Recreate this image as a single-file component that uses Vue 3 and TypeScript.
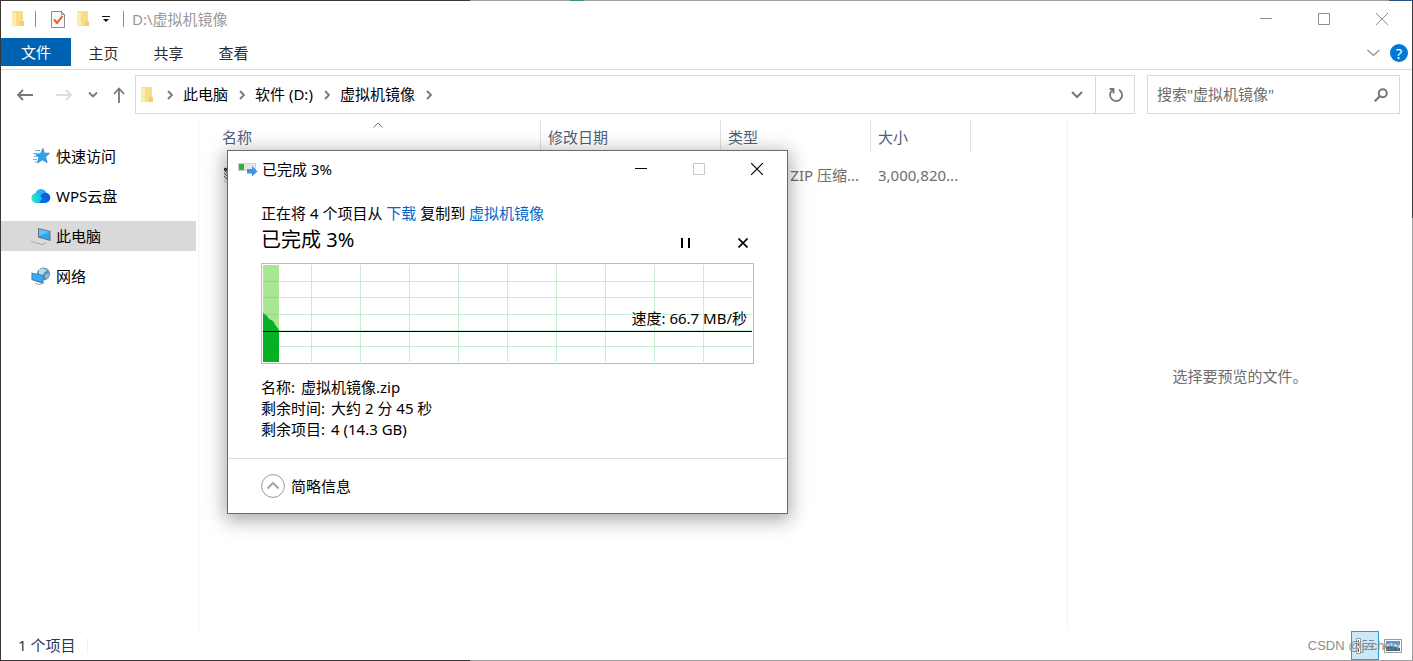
<script setup lang="ts">
interface Place {
  name: string
  icon: 'star' | 'cloud' | 'pc' | 'net'
  active?: boolean
}

const tabs: string[] = ['主页', '共享', '查看']
const crumbs: string[] = ['此电脑', '软件 (D:)', '虚拟机镜像']
const places: Place[] = [
  { name: '快速访问', icon: 'star' },
  { name: 'WPS云盘', icon: 'cloud' },
  { name: '此电脑', icon: 'pc', active: true },
  { name: '网络', icon: 'net' },
]
const gridX: number[] = [48, 97, 146, 195, 244, 293, 342, 391, 440]
const gridY: number[] = [16, 32, 49, 65, 81]
</script>

<template>
  <div class="window">
    <header class="titlebar">
      <svg class="folder" viewBox="0 0 14 18" aria-hidden="true">
        <path d="M1 1h11v15H1z" fill="#fbdc86" />
        <path d="M9 11h4v5H9z" fill="#f6cd6a" />
        <path d="M1 1l4 2v14l-4-2z" fill="#ffeab0" />
      </svg>
      <span class="bar bar-first"></span>
      <button class="quick" aria-label="属性">
        <svg width="16" height="19" viewBox="0 0 16 19" aria-hidden="true">
          <path d="M1.500 1.500h10l3 3v13h-13z" fill="#f6f8fa" stroke="#8c8c8c" />
          <path d="M11.500 1.500v3h3" fill="none" stroke="#8c8c8c" />
          <path d="M4 9.500l3 3.500 5.500-7" fill="none" stroke="#ea5a1c" stroke-width="2" />
        </svg>
      </button>
      <button class="quick" aria-label="新建文件夹">
        <svg class="folder" viewBox="0 0 14 18" aria-hidden="true">
          <path d="M1 1h11v15H1z" fill="#fbdc86" />
          <path d="M9 11h4v5H9z" fill="#f6cd6a" />
          <path d="M1 1l4 2v14l-4-2z" fill="#ffeab0" />
        </svg>
      </button>
      <button class="quick more" aria-label="自定义快速访问工具栏">
        <svg width="8" height="8" viewBox="0 0 8 8" aria-hidden="true">
          <path d="M0 1h8v1H0zM1 4h6L4 7z" fill="#111" />
        </svg>
      </button>
      <span class="bar"></span>
      <span class="title">D:\虚拟机镜像</span>
      <div class="caption">
        <button aria-label="最小化">
          <svg width="12" height="12" viewBox="0 0 12 12"><path d="M0 5.500h12" stroke="#8f8f8f" /></svg>
        </button>
        <button aria-label="最大化">
          <svg width="12" height="12" viewBox="0 0 12 12"><path d="M.5.500h11v11H.5z" fill="none" stroke="#8f8f8f" /></svg>
        </button>
        <button aria-label="关闭">
          <svg width="12" height="12" viewBox="0 0 12 12"><path d="M0 0l12 12M12 0L0 12" stroke="#8f8f8f" /></svg>
        </button>
      </div>
    </header>

    <nav class="ribbon">
      <button class="file-tab">文件</button>
      <button v-for="t in tabs" :key="t" class="tab">{{ t }}</button>
      <button class="expand" aria-label="展开功能区">
        <svg width="13" height="8" viewBox="0 0 13 8"><path d="M.5 1l6 5.500 6-5.500" fill="none" stroke="#8c8c8c" stroke-width="1.200" /></svg>
      </button>
      <button class="help" aria-label="帮助">?</button>
    </nav>

    <div class="navbar">
      <div class="history">
        <button aria-label="后退">
          <svg width="16" height="12" viewBox="0 0 16 12"><path d="M6 1L1 6l5 5M1 6h15" fill="none" stroke="#777" stroke-width="1.800" /></svg>
        </button>
        <button aria-label="前进">
          <svg width="16" height="12" viewBox="0 0 16 12"><path d="M10 1l5 5-5 5M15 6H0" fill="none" stroke="#dcdcdc" stroke-width="1.800" /></svg>
        </button>
        <button aria-label="最近浏览的位置">
          <svg width="10" height="8" viewBox="0 0 10 8"><path d="M1 1.500l4 4 4-4" fill="none" stroke="#777" stroke-width="1.800" /></svg>
        </button>
        <button aria-label="向上">
          <svg width="12" height="16" viewBox="0 0 12 16"><path d="M1 7l5-5.500L11 7M6 1.500V16" fill="none" stroke="#777" stroke-width="1.800" /></svg>
        </button>
      </div>
      <div class="address">
        <svg class="folder" viewBox="0 0 14 18" aria-hidden="true">
          <path d="M1 1h11v15H1z" fill="#fbdc86" />
          <path d="M9 11h4v5H9z" fill="#f6cd6a" />
          <path d="M1 1l4 2v14l-4-2z" fill="#ffeab0" />
        </svg>
        <svg class="chev" viewBox="0 0 6 10"><path d="M1 1l4 4-4 4" /></svg>
        <template v-for="c in crumbs" :key="c">
          <a href="#" class="crumb">{{ c }}</a>
          <svg class="chev" viewBox="0 0 6 10"><path d="M1 1l4 4-4 4" /></svg>
        </template>
        <button class="drop" aria-label="以前的位置">
          <svg width="12" height="8" viewBox="0 0 12 8"><path d="M1 1l5 5 5-5" fill="none" stroke="#777" stroke-width="2" /></svg>
        </button>
        <button class="refresh" aria-label="刷新">
          <svg width="16" height="16" viewBox="0 0 16 16"><path d="M11 2.800A6 6 0 1 1 4.500 3.200M1.500 2h4v4.500" fill="none" stroke="#777" stroke-width="1.800" /></svg>
        </button>
      </div>
      <form class="search" @submit.prevent>
        <input type="search" placeholder="搜索&quot;虚拟机镜像&quot;" aria-label="搜索" />
        <button aria-label="搜索">
          <svg width="14" height="14" viewBox="0 0 14 14"><circle cx="8.800" cy="5.200" r="4" fill="none" stroke="#777" stroke-width="2" /><path d="M6 8l-5.300 5.300" stroke="#777" stroke-width="2.200" /></svg>
        </button>
      </form>
    </div>

    <div class="body">
      <nav class="sidebar">
        <a v-for="p in places" :key="p.name" href="#" class="place" :class="{ active: p.active }">
          <svg v-if="p.icon === 'star'" width="20" height="18" viewBox="0 0 20 18">
            <path d="M12 1.500l1.300 4.800 5.200-.1-4 3.800 1.600 5.500-4.800-2.700L6.500 16l1.400-5.500-3.400-3.300 5-.4z" fill="#2da4ee" stroke="#1680c8" stroke-width=".7" />
            <path d="M4 3.500h5M2 6.500h4M3 9.500h4M2 12.500h4M4 15h2" stroke="#56b7ec" stroke-width="1" />
          </svg>
          <svg v-else-if="p.icon === 'cloud'" width="20" height="18" viewBox="0 0 20 18">
            <defs>
              <linearGradient id="cloud-left" x1="0" x2="1"><stop stop-color="#2fe8c8" /><stop offset="1" stop-color="#14aaf2" /></linearGradient>
            </defs>
            <circle cx="10" cy="7.500" r="5.500" fill="#1eb0fa" />
            <circle cx="14.300" cy="10.800" r="5" fill="#0b5ee0" />
            <path d="M5.500 6C2.500 6 .5 8.200.5 11s2 5 5 5h9L9 8.500C8.200 7 7.200 6 5.500 6z" fill="url(#cloud-left)" />
            <path d="M8 16l5-7.500 3 7.200-2 .3z" fill="#0a6cec" />
          </svg>
          <svg v-else-if="p.icon === 'pc'" width="20" height="18" viewBox="0 0 20 18">
            <path d="M7 1l12.500 3v10L7 10.500z" fill="#5c7484" />
            <path d="M8 2.200l10.500 2.600v7.800L8 9.700z" fill="#2fa5f5" />
            <path d="M8 2.200l10.500 2.600L8 9z" fill="#5fc0fa" />
            <path d="M0 14.500l11 3 4-1.500" fill="none" stroke="#a4adb4" stroke-width="1" />
          </svg>
          <svg v-else width="20" height="18" viewBox="0 0 20 18">
            <circle cx="12.500" cy="7" r="6.500" fill="#5994b8" />
            <path d="M8 2.500c3-2 6-1 8 1l-3 2-1 3-4-1z" fill="#b9dbe7" />
            <path d="M14 8l4-2c0 3-1 5-3 6z" fill="#8dbdd5" />
            <path d="M.5 5.500L12.500 8v9L.5 13z" fill="#4c7993" />
            <path d="M1.300 6.500L11.700 8.800v6.700L1.300 12.300z" fill="#38aaf5" />
            <path d="M4 16.500l4 1 3-.5" fill="none" stroke="#a0a8ae" />
          </svg>
          <span>{{ p.name }}</span>
        </a>
      </nav>

      <main class="files">
        <table>
          <colgroup>
            <col class="c-name" /><col class="c-date" /><col class="c-type" /><col class="c-size" /><col />
          </colgroup>
          <thead>
            <tr>
              <th scope="col">
                名称
                <svg class="sort" width="10" height="6" viewBox="0 0 10 6"><path d="M.5 5.500L5 1l4.500 4.500" fill="none" stroke="#777" /></svg>
              </th>
              <th scope="col">修改日期</th>
              <th scope="col">类型</th>
              <th scope="col">大小</th>
              <td></td>
            </tr>
          </thead>
          <tbody>
            <tr>
              <td>
                <svg class="zip" width="18" height="16" viewBox="0 0 18 16">
                  <path d="M2 0h15v16H2z" fill="#e8e8e8" /><path d="M2 1h4v3H2z" fill="#5b3a33" />
                  <path d="M2 3l5 5M2 6l5 5M2 9l5 5" stroke="#555" />
                </svg>
              </td>
              <td></td>
              <td class="type">ZIP 压缩...</td>
              <td>3,000,820...</td>
              <td></td>
            </tr>
          </tbody>
        </table>
      </main>

      <aside class="preview">选择要预览的文件。</aside>
    </div>

    <footer class="status">
      <span class="count">1 个项目</span>
      <span class="watermark">CSDN @jzchen</span>
      <div class="views">
        <button class="view on" aria-label="详细信息">
          <svg width="18" height="16" viewBox="0 0 18 16">
            <path d="M.5.500h4v15h-4z" fill="#fff" stroke="#999" />
            <path d="M2 2h1v2H2zM2 6h1v2H2z" fill="#667" /><path d="M2 11h1v3H2z" fill="#b43a1c" />
            <path d="M7 2.500h4M13 2.500h5M7 5.500h4M13 5.500h5M7 8.500h4M13 8.500h5M7 11.500h4M13 11.500h5" stroke="#7c8790" />
          </svg>
        </button>
        <button class="view" aria-label="大缩略图">
          <svg width="18" height="14" viewBox="0 0 18 14">
            <path d="M.5.500h17v13H.5z" fill="#fff" stroke="#999" />
            <path d="M2 2h14v5H2z" fill="#4f97e8" /><path d="M2 5l5-1 9 2v2H2z" fill="#c5e0f4" />
            <path d="M2 8l6-1 8 2v3H2z" fill="#3d6381" />
          </svg>
        </button>
      </div>
    </footer>

    <section class="dialog" role="dialog" aria-label="已完成 3%">
      <div class="dlg-title">
        <svg width="20" height="16" viewBox="0 0 20 16" aria-hidden="true">
          <path d="M.5 2.500h17v7H.5z" fill="#e4e4e4" stroke="#d0d0d0" />
          <path d="M1 3h5v6H1z" fill="#2fb135" />
          <path d="M9 8h5V5l5.500 5.500L14 15.500v-3H9z" fill="#3c98e6" />
        </svg>
        <span>已完成 3%</span>
        <div class="caption dlg-caption">
          <button aria-label="最小化">
            <svg width="12" height="12" viewBox="0 0 12 12"><path d="M0 5.500h12" stroke="#000" /></svg>
          </button>
          <button aria-label="最大化" disabled>
            <svg width="12" height="12" viewBox="0 0 12 12"><path d="M.5.500h11v11H.5z" fill="none" stroke="#c8c8c8" /></svg>
          </button>
          <button aria-label="关闭">
            <svg width="12" height="12" viewBox="0 0 12 12"><path d="M0 0l12 12M12 0L0 12" stroke="#000" stroke-width="1.200" /></svg>
          </button>
        </div>
      </div>
      <div class="dlg-body">
        <p class="from">正在将 4 个项目从 <a href="#">下载</a> 复制到 <a href="#">虚拟机镜像</a></p>
        <div class="progress-row">
          <h1>已完成 3%</h1>
          <button aria-label="暂停">
            <svg width="10" height="10" viewBox="0 0 10 10"><path d="M1 0h2v10H1zM8 0h2v10H8z" /></svg>
          </button>
          <button aria-label="取消">
            <svg width="10" height="10" viewBox="0 0 10 10"><path d="M.5.500l9 9M9.500.500l-9 9" stroke="#000" stroke-width="1.600" /></svg>
          </button>
        </div>
        <div class="chart">
          <svg width="100%" height="97" viewBox="0 0 489 97" preserveAspectRatio="none">
            <path v-for="x in gridX" :key="'x' + x" :d="`M${x}.5 0V97`" stroke="#c9edd0" />
            <path v-for="y in gridY" :key="'y' + y" :d="`M0 ${y}.5H489`" stroke="#c9edd0" />
            <path d="M0 0h16v97H0z" fill="#a8e691" />
            <path d="M0 16.500h15M0 32.500h15M0 49.500h15" stroke="#8fdb84" />
            <path d="M0 48l4 3 2 3 4 2 3 5 3 4v32H0z" fill="#06b025" />
            <path d="M0 66.500h489" stroke="#000" />
          </svg>
          <span class="speed">速度: 66.7 MB/秒</span>
        </div>
        <dl>
          <div><dt>名称:</dt><dd>虚拟机镜像.zip</dd></div>
          <div><dt>剩余时间:</dt><dd>大约 2 分 45 秒</dd></div>
          <div><dt>剩余项目:</dt><dd>4 (14.3 GB)</dd></div>
        </dl>
      </div>
      <div class="dlg-foot">
        <button class="less">
          <svg width="24" height="24" viewBox="0 0 24 24" aria-hidden="true">
            <circle cx="12" cy="12" r="11.400" fill="#fff" stroke="#999" />
            <path d="M6.500 14.500L12 9l5.500 5.500" fill="none" stroke="#a6a6a6" stroke-width="2" />
          </svg>
          <span>简略信息</span>
        </button>
      </div>
    </section>
  </div>
</template>

<style>
body {
  margin: 0;
}
</style>

<style scoped>
* {
  box-sizing: border-box;
}
/* The one-pixel frame is dark over the left third and the upper right edge. */
.window {
  position: relative;
  display: flex;
  flex-direction: column;
  min-height: 100vh;
  padding: 1px;
  background:
    linear-gradient(#fff, #fff) content-box no-repeat,
    linear-gradient(#3a3a3c, #3a3a3c) right 1px / 1px 217px no-repeat border-box,
    linear-gradient(#2d9c68, #2d9c68) 570px 0 / 14px 1px no-repeat border-box,
    linear-gradient(#2b4f86, #2b4f86) right 0 / 24px 1px no-repeat border-box,
    linear-gradient(to right, #3a3638 470px, #a0a0a0 470px) border-box;
  color: #000;
  font: 15px/20px "Noto Sans", "Noto Sans CJK SC", sans-serif;
}
button {
  display: flex;
  align-items: center;
  justify-content: center;
  margin: 0;
  padding: 0;
  border: 0;
  background: none;
  color: inherit;
  font: inherit;
}
a {
  color: inherit;
  text-decoration: none;
}
svg {
  display: block;
  flex: none;
}
.folder {
  width: 14px;
  height: 18px;
}
.titlebar {
  display: flex;
  align-items: center;
  height: 37px;
  padding: 0 1px 1px 10px;
}
.bar {
  width: 1px;
  height: 16px;
  background: #8c8c8c;
}
.bar-first {
  margin: 0 14px 0 10px;
}
.quick {
  margin-right: 10px;
}
.quick.more {
  margin: 0 13px 0 2px;
}
.title {
  margin-left: 8px;
  color: #999;
}
.caption {
  display: flex;
  margin-left: auto;
}
.caption button {
  width: 58px;
  height: 36px;
}
.ribbon {
  display: flex;
  height: 32px;
  padding-right: 4px;
  border-bottom: 1px solid #dadbdc;
  color: #2b2b2b;
}
.file-tab {
  width: 70px;
  height: 28px;
  background: #0063b1;
  color: #fff;
}
.tab {
  width: 65px;
  height: 30px;
}
.expand {
  width: 26px;
  height: 30px;
  margin-left: auto;
}
.help {
  width: 18px;
  height: 18px;
  margin: 6px 0 0 4px;
  border-radius: 50%;
  background: #0078d7;
  color: #fff;
  font-size: 15px;
}
.navbar {
  display: flex;
  height: 50px;
  padding: 5px 12px 6px 16px;
}
.history {
  display: flex;
  align-items: center;
  width: 118px;
  gap: 16px;
}
.history button:nth-child(1) {
  margin-right: 7px;
}
.history button:nth-child(4) {
  margin-left: -1px;
}
.address {
  display: flex;
  flex: 1;
  align-items: center;
  height: 39px;
  padding-left: 4px;
  border: 1px solid #d9d9d9;
}
.chev {
  width: 6px;
  height: 10px;
  margin: 0 10px 0 11px;
  fill: none;
  stroke: #777;
  stroke-width: 1.8;
}
.address .folder + .chev {
  margin-left: 13px;
}
.crumb {
  padding-bottom: 2px;
}
.drop {
  width: 37px;
  height: 37px;
  margin-left: auto;
}
.refresh {
  width: 39px;
  height: 37px;
  padding-left: 1px;
  border-left: 1px solid #d9d9d9;
}
.search {
  display: flex;
  width: 253px;
  height: 39px;
  margin-left: 12px;
  border: 1px solid #d9d9d9;
}
.search input {
  flex: 1;
  min-width: 0;
  padding: 0 0 2px 9px;
  border: 0;
  outline: 0;
  background: none;
  font: inherit;
}
.search input::placeholder {
  color: #6d6d6d;
  opacity: 1;
}
.search button {
  width: 36px;
}
.body {
  display: flex;
  flex: 1;
}
.sidebar {
  display: flex;
  flex-direction: column;
  gap: 10px;
  width: 198px;
  padding: 21px 2px 0 0;
  border-right: 1px solid #f3f3f3;
}
.place {
  display: flex;
  align-items: center;
  gap: 5px;
  height: 30px;
  padding-left: 30px;
}
.place.active {
  background: #d9d9d9;
}
.files {
  flex: 1;
  min-width: 0;
}
table {
  width: 100%;
  border-collapse: separate;
  border-spacing: 0;
  table-layout: fixed;
}
.c-name {
  width: 342px;
}
.c-date {
  width: 180px;
}
.c-type {
  width: 150px;
}
.c-size {
  width: 100px;
}
th {
  position: relative;
  height: 33px;
  padding: 0 0 0 7px;
  border-right: 1px solid #e2e2e2;
  color: #4c607a;
  font-weight: 400;
  text-align: left;
}
th:first-child {
  padding-left: 23px;
}
.sort {
  position: absolute;
  top: 2px;
  left: 174px;
}
tbody td {
  height: 44px;
  padding: 0 0 0 7px;
  color: #6d6d6d;
  white-space: nowrap;
}
tbody td:first-child {
  padding-left: 23px;
}
tbody .type {
  padding: 0 12px 0 0;
  text-align: right;
}
.preview {
  display: flex;
  align-items: center;
  justify-content: center;
  width: 345px;
  border-left: 1px solid #f3f3f3;
  color: #6d6d6d;
}
.status {
  display: flex;
  align-items: center;
  height: 29px;
  padding: 0 5px 0 17px;
}
.count {
  padding: 0 12px 2px 0;
  border-right: 1px solid #f0f0f0;
  color: #1e395b;
  line-height: 14px;
}
.views {
  display: flex;
  margin-left: auto;
}
.view {
  width: 28px;
  height: 29px;
}
.view.on {
  border: 1px solid #26a0da;
  background: #cbe8f6;
}
.watermark {
  position: absolute;
  right: 14px;
  bottom: 5px;
  z-index: 1;
  color: #8c8c8c;
  font-family: "Liberation Sans", Arial, sans-serif;
  font-size: 13px;
}
.dialog {
  position: absolute;
  top: 150px;
  left: 227px;
  width: 561px;
  border: 1px solid #6b6b6b;
  background: #fff;
  box-shadow: 0 4px 18px 2px rgba(0, 0, 0, 0.35);
}
.dlg-title {
  display: flex;
  align-items: center;
  gap: 4px;
  height: 36px;
  padding: 0 1px 0 10px;
}
.dlg-body {
  padding: 16px 33px 0;
}
p,
h1,
dl,
dd {
  margin: 0;
}
.from a {
  color: #0066cc;
}
.progress-row {
  display: flex;
  align-items: center;
  gap: 48px;
  height: 40px;
  padding-right: 6px;
}
h1 {
  flex: 1;
  padding-bottom: 6px;
  font-size: 20px;
  font-weight: 400;
  line-height: 28px;
}
.chart {
  position: relative;
  height: 101px;
  padding: 1px;
  border: 1px solid #bcbcbc;
}
.speed {
  position: absolute;
  right: 6px;
  bottom: 35px;
}
dl {
  margin-top: 13px;
  line-height: 21px;
}
dl div {
  display: flex;
  gap: 6px;
}
.dlg-foot {
  margin-top: 18px;
  padding: 15px 33px;
  border-top: 1px solid #dfdfdf;
}
.less {
  gap: 6px;
}
</style>
